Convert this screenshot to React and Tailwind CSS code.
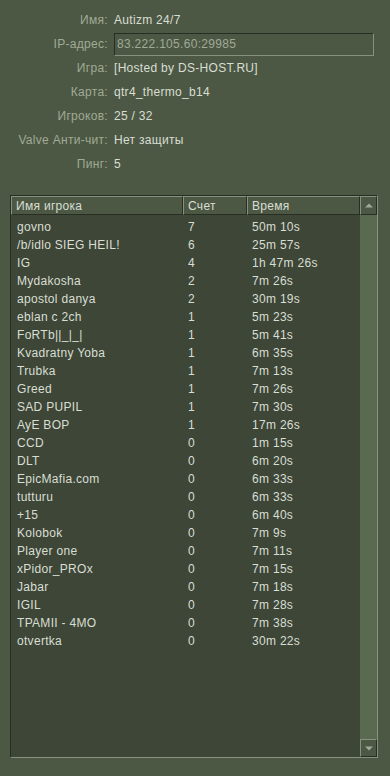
const info = [
  { label: "Имя:", value: "Autizm 24/7" },
  { label: "IP-адрес:", value: "83.222.105.60:29985", input: true },
  { label: "Игра:", value: "[Hosted by DS-HOST.RU]" },
  { label: "Карта:", value: "qtr4_thermo_b14" },
  { label: "Игроков:", value: "25 / 32" },
  { label: "Valve Анти-чит:", value: "Нет защиты" },
  { label: "Пинг:", value: "5" },
];

const players = [
  ["govno", "7", "50m 10s"],
  ["/b/idlo SIEG HEIL!", "6", "25m 57s"],
  ["IG", "4", "1h 47m 26s"],
  ["Mydakosha", "2", "7m 26s"],
  ["apostol danya", "2", "30m 19s"],
  ["eblan c 2ch", "1", "5m 23s"],
  ["FoRTb||_|_|", "1", "5m 41s"],
  ["Kvadratny Yoba", "1", "6m 35s"],
  ["Trubka", "1", "7m 13s"],
  ["Greed", "1", "7m 26s"],
  ["SAD PUPIL", "1", "7m 30s"],
  ["AyE BOP", "1", "17m 26s"],
  ["CCD", "0", "1m 15s"],
  ["DLT", "0", "6m 20s"],
  ["EpicMafia.com", "0", "6m 33s"],
  ["tutturu", "0", "6m 33s"],
  ["+15", "0", "6m 40s"],
  ["Kolobok", "0", "7m 9s"],
  ["Player one", "0", "7m 11s"],
  ["xPidor_PROx", "0", "7m 15s"],
  ["Jabar", "0", "7m 18s"],
  ["IGIL", "0", "7m 28s"],
  ["TPAMII - 4MO", "0", "7m 38s"],
  ["otvertka", "0", "30m 22s"],
];

function HeaderCell({ children }) {
  return (
    <div className="flex h-full items-center border border-t-[#889180] border-l-[#889180] border-b-[#292e23] border-r-[#292e23] bg-[#4c5844] px-[4px] text-[#d8ded3]">
      {children}
    </div>
  );
}

function Arrow({ up }) {
  return (
    <svg width="8" height="5" viewBox="0 0 8 5">
      <path d={up ? "M0 4.5 L4 0.5 L8 4.5 Z" : "M0 0.5 L4 4.5 L8 0.5 Z"} fill="#a0aa95" />
    </svg>
  );
}

export default function App() {
  return (
    <div
      className="flex h-[776px] w-[390px] flex-col bg-[#4c5844] text-[12px] leading-none tracking-[0.3px]"
      style={{ fontFamily: "'Liberation Sans', Arial, sans-serif" }}
    >
      <div className="pt-[8px]">
        {info.map((row) => (
          <div key={row.label} className="flex h-[24px] items-center">
            <div className="w-[108px] text-right text-[#a0aa95]">{row.label}</div>
            {row.input ? (
              <div className="ml-[6px] flex h-[23px] w-[260px] items-center border border-t-[#292e23] border-l-[#292e23] border-b-[#889180] border-r-[#889180] bg-[#4c5844] px-[2px] text-[#a0aa95]">
                {row.value}
              </div>
            ) : (
              <div className="ml-[6px] text-[#d8ded3]">{row.value}</div>
            )}
          </div>
        ))}
      </div>

      <div className="ml-[10px] mt-[19px] flex h-[563px] w-[368px] border border-t-[#292e23] border-l-[#292e23] border-b-[#889180] border-r-[#889180] bg-[#3e4637]">
        <div className="flex min-w-0 flex-1 flex-col">
          <div className="grid h-[19px] grid-cols-[172px_64px_1fr]">
            <HeaderCell>Имя игрока</HeaderCell>
            <HeaderCell>Счет</HeaderCell>
            <HeaderCell>Время</HeaderCell>
          </div>
          <div className="pt-[3px] text-[#d8ded3]">
            {players.map(([name, score, time], i) => (
              <div key={i} className="grid h-[18px] grid-cols-[172px_64px_1fr] items-center">
                <div className="pl-[6px]">{name}</div>
                <div className="pl-[5px]">{score}</div>
                <div className="pl-[5px]">{time}</div>
              </div>
            ))}
          </div>
        </div>
        <div className="flex w-[17px] flex-col bg-[#5a6a50]">
          <div className="flex h-[19px] items-center justify-center border border-t-[#889180] border-l-[#889180] border-b-[#292e23] border-r-[#292e23] bg-[#4c5844]">
            <Arrow up />
          </div>
          <div className="flex-1" />
          <div className="flex h-[18px] items-center justify-center border border-t-[#889180] border-l-[#889180] border-b-[#292e23] border-r-[#292e23] bg-[#4c5844]">
            <Arrow />
          </div>
        </div>
      </div>
    </div>
  );
}
